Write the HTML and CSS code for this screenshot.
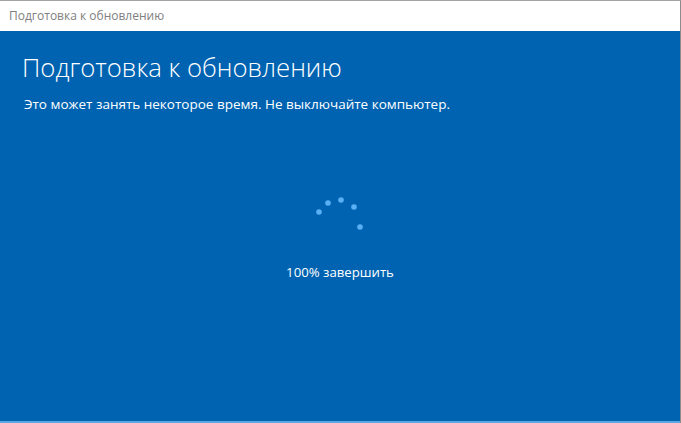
FILE: index.html
```html
<!DOCTYPE html>
<html lang="ru">
<head>
    <meta charset="UTF-8">
    <meta name="viewport" content="width=device-width, initial-scale=1.0">
    <title>Подготовка к обновлению</title>
    <link rel="stylesheet" href="styles.css">
</head>
<body>
    <div class="window">
        <div class="titlebar">Подготовка к обновлению</div>
        <div class="screen">
            <h1 class="heading">Подготовка к обновлению</h1>
            <p class="subtitle">Это может занять некоторое время. Не выключайте компьютер.</p>
            <div class="progress">
                <svg class="spinner" width="60" height="40" viewBox="0 0 60 40">
                    <circle cx="9" cy="17" r="2.8"/>
                    <circle cx="18" cy="8" r="2.8"/>
                    <circle cx="31" cy="5" r="2.8"/>
                    <circle cx="44" cy="12" r="2.8"/>
                    <circle cx="50" cy="32" r="2.8"/>
                </svg>
                <div class="percent">100% завершить</div>
            </div>
        </div>
    </div>
</body>
</html>
```

FILE: styles.css
```css
html, body { margin: 0; padding: 0; height: 100%; }
body { font-family: "Open Sans", "Noto Sans", sans-serif; background: #0063b1; }
.window { display: flex; flex-direction: column; height: 423px; border-top: 1px solid #a3a3a3; border-right: 1px solid #8c8c8c; box-sizing: border-box; }
.titlebar { height: 30px; flex: none; background: #fff; color: #808080; font-size: 12px; line-height: 30px; padding-left: 9px; }
.screen { flex: 1; background: #0063b1; color: #fff; border-bottom: 2px solid #5fa6e0; padding: 0 22px; }
.heading { margin: 20px 0 0; font-size: 25.7px; font-weight: 300; line-height: 34px; letter-spacing: 0; }
.subtitle { margin: 10px 0 0 2px; font-size: 13.5px; line-height: 18px; }
.progress { display: flex; flex-direction: column; align-items: center; margin-top: 82px; }
.spinner { fill: #5ab0f5; margin-left: 0; }
.percent { margin-top: 28px; font-size: 13.2px; line-height: 18px; }
```
